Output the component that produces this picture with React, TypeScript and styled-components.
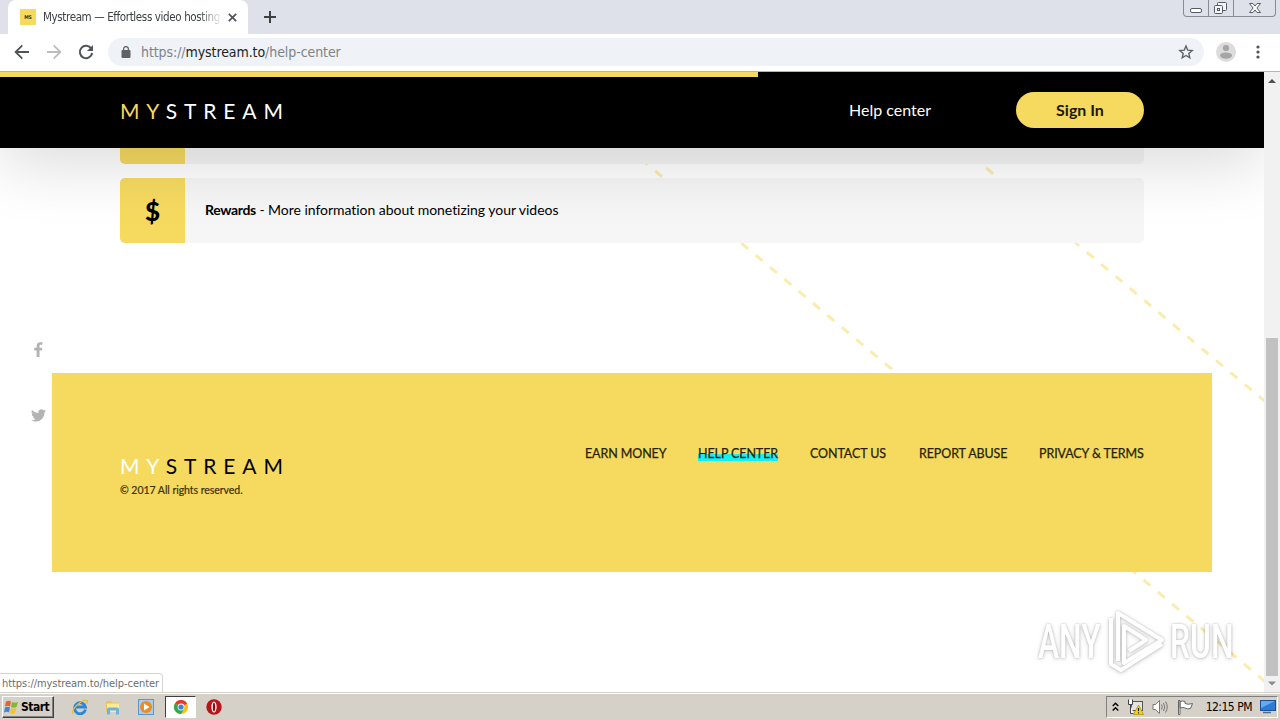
import React from "react";
import styled, { createGlobalStyle } from "styled-components";

const colors = {
  yellow: "#f6da60",
  black: "#000000",
  white: "#ffffff",
  strip: "#dee1e9",
  omnibox: "#eff3f7",
  icon: "#5f6368",
  row: "#f6f6f6",
  social: "#b3b3b3",
  cyan: "#14f1f5",
  taskbar: "#d5d0c8",
};

const system = `"DejaVu Sans Condensed", "DejaVu Sans", sans-serif`;
const brand = `Lato, "Open Sans", sans-serif`;

const footerLinks = [
  { label: "EARN MONEY", width: 81, active: false },
  { label: "HELP CENTER", width: 80, active: true },
  { label: "CONTACT US", width: 77, active: false },
  { label: "REPORT ABUSE", width: 88, active: false },
  { label: "PRIVACY & TERMS", width: 105, active: false },
];

const Logo = ({ first, rest }: { first: string; rest: string }) => (
  <LogoText $color={rest}>
    <LogoAccent $color={first}>MY</LogoAccent>STREAM
  </LogoText>
);

const TabStrip = () => (
  <Strip>
    <Tab>
      <Favicon>MS</Favicon>
      <TabTitle>Mystream — Effortless video hosting</TabTitle>
      <svg width="9" height="9" viewBox="0 0 9 9">
        <path d="M.8.8l7.4 7.4M8.2.8L.8 8.2" stroke="#505357" strokeWidth="1.7" />
      </svg>
    </Tab>
    <NewTab>
      <svg width="12" height="12" viewBox="0 0 12 12">
        <path d="M6 0v12M0 6h12" stroke="#3c4043" strokeWidth="2" />
      </svg>
    </NewTab>
    <WindowButtons>
      <WindowButton $width={24}>
        <svg width="25" height="16" viewBox="0 0 25 16" fill="#fff" stroke="#555b66">
          <rect x="6.5" y="8.5" width="11" height="4" rx="1.5" />
        </svg>
      </WindowButton>
      <WindowButton $width={25}>
        <svg width="25" height="16" viewBox="0 0 25 16" fill="#f4f5f8" stroke="#555b66">
          <rect x="8.5" y="2.5" width="9" height="8" rx="1" />
          <rect x="5.5" y="5.5" width="8" height="8" rx="1" />
          <rect x="8.5" y="8.5" width="2" height="2" />
        </svg>
      </WindowButton>
      <WindowButton $width={42}>
        <svg width="42" height="16" viewBox="0 0 42 16" fill="#fff" stroke="#555b66">
          <path d="M15.5 3.5h3.5l2 2.5 2-2.5h3.5l-3.6 4.5 3.6 4.5H23l-2-2.5-2 2.5h-3.5L19.1 8z" />
        </svg>
      </WindowButton>
    </WindowButtons>
  </Strip>
);

const Toolbar = () => (
  <ToolbarRow>
    <NavIcons>
      <svg width="16" height="16" viewBox="0 0 16 16" fill="none" stroke="#505357" strokeWidth="1.8">
        <path d="M15 8H2M8.3 1.3L1.6 8l6.7 6.7" />
      </svg>
      <svg width="16" height="16" viewBox="0 0 16 16" fill="none" stroke="#babcbe" strokeWidth="1.8">
        <path d="M1 8h13M7.7 1.3L14.4 8l-6.7 6.7" />
      </svg>
      <svg width="16" height="16" viewBox="0 0 16 16" fill="none" stroke="#505357" strokeWidth="2">
        <path d="M13.3 4.6A6.2 6.2 0 1 0 14.2 9" />
        <path d="M15 1v6H9z" fill="#505357" stroke="none" />
      </svg>
    </NavIcons>
    <Omnibox>
      <svg width="10" height="12" viewBox="0 0 10 12">
        <rect x="0.5" y="4" width="9" height="8" rx="1" fill="#5f6368" />
        <path d="M2.6 5V3a2.4 2.4 0 0 1 4.8 0v2" fill="none" stroke="#5f6368" strokeWidth="1.3" />
      </svg>
      <Url>
        https://<b>mystream.to</b>/help-center
      </Url>
      <svg width="16" height="16" viewBox="0 0 16 16" fill="none" stroke={colors.icon} strokeWidth="1.4">
        <path d="M8 2l1.7 4.1 4.5.4-3.4 2.9 1 4.4L8 11.5l-3.8 2.3 1-4.4L1.8 6.5l4.5-.4z" />
      </svg>
    </Omnibox>
    <svg width="20" height="20" viewBox="0 0 20 20">
      <circle cx="10" cy="10" r="10" fill="#dcdcdc" />
      <circle cx="10" cy="6" r="3.1" fill="#a5a5a5" />
      <ellipse cx="10" cy="13.6" rx="6" ry="3.2" fill="#a5a5a5" />
    </svg>
    <Dots viewBox="0 0 4 14" fill="#505357">
      <circle cx="2" cy="2" r="1.6" />
      <circle cx="2" cy="7" r="1.6" />
      <circle cx="2" cy="12" r="1.6" />
    </Dots>
  </ToolbarRow>
);

const DashedLines = () => (
  <Backdrop viewBox="0 0 1264 620">
    <g stroke="#fbecae" strokeWidth="3" strokeDasharray="9 9.73">
      <path d="M626.4 74.9L1300 638.9" />
      <path d="M957.5 71.9L1300 358.7" />
    </g>
  </Backdrop>
);

const Page = () => (
  <Viewport>
    <DashedLines />
    <Header>
      <Logo first={colors.yellow} rest={colors.white} />
      <HelpLink>Help center</HelpLink>
      <SignIn>Sign In</SignIn>
    </Header>
    <Progress />
    <Rows>
      <Row $height={16} $cut>
        <RowIcon />
      </Row>
      <Row $height={65}>
        <RowIcon>$</RowIcon>
        <RowText>
          <b>Rewards</b> - More information about monetizing your videos
        </RowText>
      </Row>
    </Rows>
    <Bottom>
      <Social>
        <svg width="9" height="15" viewBox="0 0 9 15" fill={colors.social}>
          <path d="M2.6 15V8.4H.2V5.8h2.4V3.9C2.6 1.5 4 .2 6.2.2c1 0 1.9.1 2.2.1v2.5H6.9c-1.2 0-1.4.6-1.4 1.4v1.6h2.8l-.4 2.6H5.5V15z" />
        </svg>
        <svg width="15" height="13" viewBox="0 0 24 20" fill={colors.social}>
          <path d="M24 2.4a10 10 0 0 1-2.8.8A5 5 0 0 0 23.300.5a10 10 0 0 1-3.1 1.2 4.9 4.9 0 0 0-8.4 4.5A14 14 0 0 1 1.7 1 4.9 4.9 0 0 0 3.2 7.6 4.9 4.9 0 0 1 1 7v.1a4.9 4.9 0 0 0 3.9 4.8 4.9 4.9 0 0 1-2.2.1 4.9 4.9 0 0 0 4.6 3.4A9.9 9.9 0 0 1 0 17.5 14 14 0 0 0 7.5 19.7c9.1 0 14-7.5 14-14v-.7A10 10 0 0 0 24 2.4z" />
        </svg>
      </Social>
      <Footer>
        <FooterBrand>
          <Logo first={colors.white} rest={colors.black} />
          <Copyright>© 2017 All rights reserved.</Copyright>
        </FooterBrand>
        <FooterNav>
          {footerLinks.map((link) => (
            <FooterLink key={link.label} $width={link.width} $active={link.active}>
              {link.label}
            </FooterLink>
          ))}
        </FooterNav>
      </Footer>
    </Bottom>
    <Watermark>
      <MarkText>ANY</MarkText>
      <svg width="60" height="64" viewBox="0 0 60 64" fill="none" stroke="#fff" strokeWidth="4" strokeLinejoin="round">
        <path d="M12 52V4l44 27-38 23V17l22 14-17 11" />
        <path d="M5 9v46l10 6 41-26" />
      </svg>
      <MarkText>RUN</MarkText>
    </Watermark>
    <StatusBubble>https://mystream.to/help-center</StatusBubble>
  </Viewport>
);

const ScrollBar = () => (
  <Scroll>
    <svg width="16" height="16" viewBox="0 0 16 16">
      <path d="M4 11l4-4 4 4z" fill="#505050" />
    </svg>
    <Thumb />
    <svg width="16" height="16" viewBox="0 0 16 16">
      <path d="M4 5.5l4 4 4-4z" fill="#8b8b8b" />
    </svg>
  </Scroll>
);

const TaskBar = () => (
  <Bar>
    <Start>
      <svg width="15" height="14" viewBox="0 0 15 14">
        <path d="M2 1.5q2.5-1.5 5 0L6 6.5q-2.5-1.5-5 0z" fill="#e8622c" />
        <path d="M8 2q2.5 1.5 6 0l-1.5 5q-3 1.5-5.5 0z" fill="#7db83a" />
        <path d="M1 7.5q2.5-1.5 5 0L5 12.5q-2.5-1.5-5 0z" fill="#3f86d6" />
        <path d="M7 8q2.5 1.5 5.5 0L11 13q-2.5 1.5-5 0z" fill="#f5c22e" />
      </svg>
      Start
    </Start>
    <Launch>
      <svg width="16" height="16" viewBox="0 0 16 16" fill="none">
        <path d="M13.5 10.5A5.5 5.5 0 1 1 13.5 8H4" stroke="#2a86d8" strokeWidth="2.8" />
        <path d="M1 14.5C-1 10 10 0 15 1.5c1 .7.3 2-.5 3" stroke="#e9b93a" strokeWidth="1.3" />
      </svg>
    </Launch>
    <Launch>
      <svg width="16" height="16" viewBox="0 0 16 16">
        <path d="M1 2h5l1 1.5h7V13H1z" fill="#e6c458" />
        <path d="M2 4.5h12V13H2z" fill="#fbe99a" />
        <path d="M2 15.5v-5Q2 8.5 4 8.5h8q2 0 2 2v5h-3v-4H5v4z" fill="#6db3de" />
      </svg>
    </Launch>
    <Launch>
      <svg width="16" height="16" viewBox="0 0 16 16">
        <rect x="0.5" y="0.5" width="15" height="15" fill="#a9cdef" stroke="#5a96d2" />
        <circle cx="8" cy="8" r="6" fill="#f28a1c" />
        <path d="M6 4.5l5.5 3.5L6 11.5z" fill="#fff" />
      </svg>
    </Launch>
    <Launch $pressed>
      <svg width="14" height="14" viewBox="0 0 14 14">
        <circle cx="7" cy="7" r="7" fill="#fbc116" />
        <path d="M7 7L.9 3.5A7 7 0 0 1 13.1 3.5z" fill="#e23a2e" />
        <path d="M7 7L.9 3.5A7 7 0 0 0 7 14l3-5z" fill="#2da94f" />
        <circle cx="7" cy="7" r="3.4" fill="#fff" />
        <circle cx="7" cy="7" r="2.6" fill="#3f7ee8" />
      </svg>
    </Launch>
    <Launch>
      <svg width="16" height="16" viewBox="0 0 16 16">
        <circle cx="8" cy="8" r="7.7" fill="#b5161c" />
        <ellipse cx="8" cy="8" rx="2.6" ry="5.6" fill="#fff" />
        <ellipse cx="8" cy="8" rx="1.2" ry="4.6" fill="#8e1015" />
      </svg>
    </Launch>
    <Tray>
      <svg width="7" height="10" viewBox="0 0 7 10" fill="none" stroke="#000" strokeWidth="1.4">
        <path d="M.7 4l2.8-2.8L6.3 4M.7 8.5l2.8-2.8 2.8 2.8" />
      </svg>
      <svg width="17" height="16" viewBox="0 0 17 16">
        <rect x="4.5" y="2.5" width="11" height="9" fill="#e4e4e0" stroke="#555" />
        <path d="M1.5.5v5h4v-5M3.5 5.5v9h3" fill="#fff" stroke="#444" />
        <path d="M11.5 6l5 9.5h-10z" fill="#f8d51c" stroke="#a88a00" strokeWidth=".7" />
        <path d="M11.5 9v3.3M11.5 13.2v1.3" stroke="#222" strokeWidth="1.2" />
      </svg>
      <svg width="17" height="16" viewBox="0 0 17 16" fill="none" stroke="#777">
        <path d="M1 5.5h2.5L7.5 1.5v13l-4-4H1z" fill="#fff" />
        <path d="M9.5 5.5q1.5 2.5 0 5M11.5 4q2.5 4 0 8M13.5 2.5q3.5 5.5 0 11" />
      </svg>
      <svg width="17" height="16" viewBox="0 0 17 16" fill="#fff" stroke="#666">
        <path d="M1.5 15.5V1.5h1.5v14zM3 2.5q3-1 5 0v2q3 1.5 7.5 0l-2 5q-3 1-5.5-.5-2-1-5 0z" />
      </svg>
      <Clock>12:15 PM</Clock>
      <svg width="16" height="14" viewBox="0 0 16 14">
        <rect x=".5" y=".5" width="15" height="10" fill="#2e7bd6" stroke="#1c4f94" />
        <path d="M1 1h14L1 8z" fill="#68a8ee" />
        <path d="M3 12.5h8" stroke="#536b8a" strokeWidth="1.5" />
      </svg>
    </Tray>
  </Bar>
);

export default function App() {
  return (
    <>
      <GlobalStyle />
      <Screen>
        <TabStrip />
        <Toolbar />
        <Content>
          <Page />
          <ScrollBar />
        </Content>
        <TaskBar />
      </Screen>
    </>
  );
}

const GlobalStyle = createGlobalStyle`
  * {
    box-sizing: border-box;
  }
  body {
    margin: 0;
    overflow: hidden;
    background: ${colors.white};
  }
  svg {
    display: block;
    flex: none;
  }
`;

const Screen = styled.div`
  width: 1280px;
  height: 720px;
  display: flex;
  flex-direction: column;
  font-family: ${system};
  white-space: nowrap;
  overflow: hidden;
`;

const Strip = styled.div`
  height: 34px;
  display: flex;
  padding-left: 8px;
  background: ${colors.strip};
`;

const Tab = styled.div`
  width: 240px;
  height: 34px;
  display: flex;
  align-items: center;
  padding: 0 11px 0 12px;
  border-radius: 8px 8px 0 0;
  background: ${colors.white};
`;

const Favicon = styled.span`
  width: 16px;
  height: 16px;
  flex: none;
  margin-right: 7px;
  background: ${colors.yellow};
  color: #33300f;
  font: bold 5px/16px ${system};
  text-align: center;
`;

const TabTitle = styled.span`
  width: 178px;
  flex: none;
  margin-right: 7px;
  color: #3c4043;
  font-size: 11.5px;
  letter-spacing: -0.37px;
  mask-image: linear-gradient(to right, #000 155px, transparent 180px);
`;

const NewTab = styled.span`
  display: flex;
  align-items: center;
  padding-left: 16px;
`;

const WindowButtons = styled.div`
  height: 17px;
  display: flex;
  margin-left: auto;
  margin-right: 4px;
  border: 1px solid #868b96;
  border-top: 0;
  border-radius: 0 0 4px 4px;
`;

const WindowButton = styled.span<{ $width: number }>`
  width: ${({ $width }) => $width}px;
  overflow: hidden;
  & + & {
    border-left: 1px solid #868b96;
  }
`;

const ToolbarRow = styled.div`
  height: 38px;
  display: flex;
  align-items: center;
  padding: 0 20px 2px 14px;
  background: ${colors.white};
  border-bottom: 1px solid #b4b5b7;
`;

const NavIcons = styled.div`
  display: flex;
  gap: 16px;
  margin-right: 14px;
`;

const Omnibox = styled.div`
  width: 1096px;
  height: 28px;
  display: flex;
  align-items: center;
  padding: 0 10px 0 13px;
  margin-right: 12px;
  border-radius: 14px;
  background: ${colors.omnibox};
`;

const Url = styled.span`
  flex: 1;
  margin-left: 10px;
  color: #7d8287;
  font-size: 14px;
  letter-spacing: -0.08px;
  b {
    color: #202124;
    font-weight: 400;
  }
`;

const Dots = styled.svg`
  width: 4px;
  height: 14px;
  margin-left: 20px;
`;

const Content = styled.div`
  height: 620px;
  display: flex;
`;

const Viewport = styled.main`
  position: relative;
  width: 1264px;
  height: 620px;
  overflow: hidden;
  font-family: ${brand};
`;

const Backdrop = styled.svg`
  position: absolute;
  inset: 0;
  width: 1264px;
  height: 620px;
`;

const Header = styled.header`
  position: relative;
  z-index: 2;
  height: 76px;
  display: flex;
  align-items: center;
  padding: 2px 120px 0;
  background: ${colors.black};
  box-shadow: 0 15px 65px rgba(0, 0, 0, 0.15);
`;

const Progress = styled.div`
  position: absolute;
  z-index: 3;
  top: 0;
  left: 0;
  width: 758px;
  height: 5px;
  background: ${colors.yellow};
`;

const LogoText = styled.span<{ $color: string }>`
  color: ${({ $color }) => $color};
  font-family: ${brand};
  font-size: 21px;
  line-height: 24px;
  letter-spacing: 6.85px;
`;

const LogoAccent = styled.span<{ $color: string }>`
  color: ${({ $color }) => $color};
`;

const HelpLink = styled.a`
  margin: 0 1px 4px auto;
  width: 82px;
  color: ${colors.white};
  font-size: 16px;
`;

const SignIn = styled.a`
  width: 128px;
  height: 36px;
  margin-left: 84px;
  margin-bottom: 2px;
  border-radius: 18px;
  background: ${colors.yellow};
  color: #1d1803;
  font-size: 16px;
  font-weight: 700;
  line-height: 36px;
  text-align: center;
`;

const Rows = styled.section`
  position: relative;
  display: flex;
  flex-direction: column;
  gap: 14px;
  padding: 0 120px;
`;

const Row = styled.div<{ $height: number; $cut?: boolean }>`
  height: ${({ $height }) => $height}px;
  display: flex;
  align-items: center;
  overflow: hidden;
  border-radius: ${({ $cut }) => ($cut ? "0 0 5px 5px" : "5px")};
  background: ${colors.row};
`;

const RowIcon = styled.span`
  width: 65px;
  height: 100%;
  display: flex;
  align-items: center;
  justify-content: center;
  background: ${colors.yellow};
  font-size: 26px;
  font-weight: 900;
`;

const RowText = styled.span`
  margin-left: 20px;
  margin-bottom: 2px;
  font-size: 14px;
  letter-spacing: -0.04px;
  b {
    letter-spacing: -0.35px;
  }
`;

const Bottom = styled.div`
  position: relative;
  height: 199px;
  display: flex;
  margin-top: 130px;
`;

const Social = styled.div`
  width: 52px;
  height: 80px;
  display: flex;
  flex-direction: column;
  align-items: center;
  justify-content: space-between;
  margin-top: -31px;
  padding-left: 25px;
`;

const Footer = styled.footer`
  width: 1160px;
  height: 199px;
  display: flex;
  justify-content: space-between;
  padding: 72px 68px 0;
  background: ${colors.yellow};
`;

const FooterBrand = styled.div`
  display: flex;
  flex-direction: column;
  margin-top: 9px;
`;

const Copyright = styled.span`
  margin-top: 5px;
  color: #3a3007;
  font-size: 10.5px;
  line-height: 14px;
  letter-spacing: -0.04px;
  -webkit-text-stroke: 0.2px #3a3007;
`;

const FooterNav = styled.nav`
  display: flex;
  gap: 32px;
`;

const FooterLink = styled.a<{ $width: number; $active: boolean }>`
  width: ${({ $width }) => $width}px;
  height: 16px;
  color: #261f04;
  font-size: 12.5px;
  line-height: 17px;
  letter-spacing: -0.1px;
  -webkit-text-stroke: 0.25px #261f04;
  background: ${({ $active }) => ($active ? `linear-gradient(${colors.cyan}, ${colors.cyan}) 0 9px / 100% 7px no-repeat` : "none")};
`;

const Watermark = styled.div`
  position: absolute;
  left: 1038px;
  top: 537px;
  width: 196px;
  height: 64px;
  display: flex;
  align-items: center;
  justify-content: space-between;
  filter: drop-shadow(0 0 1px rgba(0, 0, 0, 0.2)) drop-shadow(0 1px 2px rgba(0, 0, 0, 0.18));
`;

const MarkText = styled.span`
  width: 64px;
  padding-top: 2px;
  color: ${colors.white};
  font: 500 49px/64px Roboto, sans-serif;
  transform: scaleX(0.65);
  transform-origin: 0 50%;
`;

const StatusBubble = styled.div`
  position: absolute;
  left: 0;
  bottom: 0;
  width: 163px;
  height: 19px;
  padding-left: 2px;
  border: 1px solid #d4d4d4;
  border-left: 0;
  border-bottom: 0;
  border-radius: 0 4px 0 0;
  background: ${colors.white};
  color: #6a6d70;
  font: 11px/19px ${system};
  letter-spacing: -0.06px;
`;

const Scroll = styled.div`
  width: 16px;
  height: 620px;
  display: flex;
  flex-direction: column;
  background: #f1f1f1;
`;

const Thumb = styled.div`
  width: 12px;
  height: 338px;
  margin: auto 2px 0;
  background: #c1c1c1;
`;

const Bar = styled.div`
  height: 28px;
  display: flex;
  align-items: center;
  padding: 2px 2px 0;
  background: ${colors.taskbar};
  box-shadow: inset 0 1px #d5d0c8, inset 0 2px #fff;
`;

const Start = styled.div`
  width: 52px;
  height: 22px;
  display: flex;
  align-items: center;
  gap: 2px;
  margin-right: 10px;
  padding-left: 1px;
  border: 1px solid;
  border-color: #fff #404040 #404040 #fff;
  box-shadow: inset -1px -1px #808080;
  font: bold 12px ${system};
  letter-spacing: -0.5px;
`;

const Launch = styled.span<{ $pressed?: boolean }>`
  width: ${({ $pressed }) => ($pressed ? 31 : 32)}px;
  height: 22px;
  display: flex;
  align-items: center;
  justify-content: center;
  margin: 0 ${({ $pressed }) => ($pressed ? 2 : 1)}px 0 ${({ $pressed }) => ($pressed ? 2 : 0)}px;
  background: ${({ $pressed }) => ($pressed ? colors.white : "none")};
  border: ${({ $pressed }) => ($pressed ? "1px solid" : "0")};
  border-color: #404040 #fff #fff #404040;
`;

const Tray = styled.div`
  width: 172px;
  height: 22px;
  display: flex;
  align-items: center;
  gap: 8px;
  margin-left: auto;
  padding: 0 1px 0 5px;
  border: 1px solid;
  border-color: #808080 #fff #fff #808080;
`;

const Clock = styled.span`
  margin-left: auto;
  font-size: 12px;
  letter-spacing: -0.5px;
`;
